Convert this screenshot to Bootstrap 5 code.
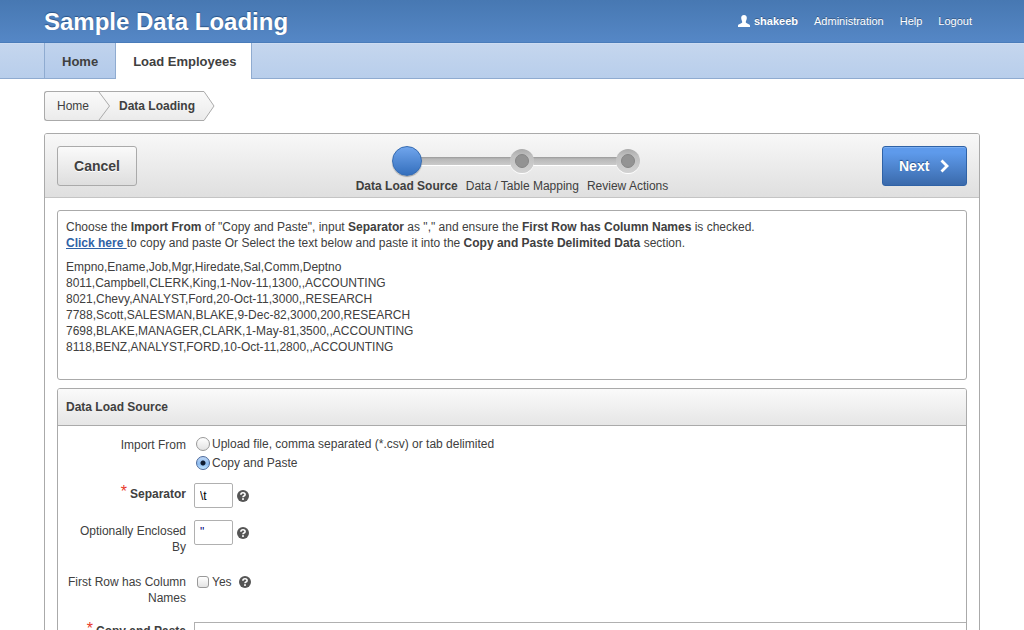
<!DOCTYPE html>
<html lang="en">
<head>
<meta charset="utf-8">
<meta name="viewport" content="width=device-width, initial-scale=1">
<title>Sample Data Loading</title>
<link href="https://cdn.jsdelivr.net/npm/bootstrap@5.3.0/dist/css/bootstrap.min.css" rel="stylesheet">
<style>
  body { font-family: "Liberation Sans", Arial, sans-serif; font-size: 12px; line-height: 16px; color: #404040; background: #fff; }
  .page-gutter { padding-left: 44px; padding-right: 44px; }

  .app-header { height: 43px; background: linear-gradient(#4778b2, #5587c6); border-bottom: 1px solid #4a7cba; }
  .app-title { font-size: 24px; line-height: 28px; padding-top: 2px; font-weight: 700; color: #fff; text-shadow: 0 -1px 1px #2c5588; }
  .user-nav { font-size: 11px; gap: 16px; padding-right: 8px; color: #fff; text-shadow: 0 -1px 0 rgba(0,0,0,.3); }
  .user-nav a { color: #fff; text-decoration: none; }

  .tab-bar { height: 36px; background: linear-gradient(#c5d6ee, #b8ceeb); border-bottom: 1px solid #8fabd0; box-shadow: inset 0 1px #cddcf1; }
  .tab-bar .nav-link { height: 36px; padding: 11px 16px 9px 17px; font-size: 13px; line-height: 16px; font-weight: 700; color: #404040; border: solid #8fabd0; border-width: 0 0 0 1px; border-radius: 0; }
  .tab-bar .nav-link:not(.active) { padding-right: 17px; background: linear-gradient(#c0d3ed, #b3caea); border-bottom-width: 1px; }
  .tab-bar .nav-link.active { padding-right: 15px; color: #404040; background: #fff; border-right-width: 1px; }

  .crumbs { height: 30px; margin: 12px 0; }
  .crumbs ol { height: 30px; border: 1px solid #aaa; border-right: 0; border-radius: 3px 0 0 3px; background: linear-gradient(#fafafa, #ebebeb); padding-left: 12px; }
  .crumbs a { color: #404040; text-decoration: none; padding-right: 9px; }
  .crumbs .current { font-weight: 700; padding: 0 8px; }

  .wizard { border: 1px solid #aaa; border-radius: 3px; }
  .wizard-head { display: grid; grid-template-columns: 1fr auto 1fr; height: 64px; padding: 12px; background: linear-gradient(#f8f8f8, #dfdfdf); border-bottom: 1px solid #c4c4c4; border-radius: 2px 2px 0 0; }
  .wizard-btn { height: 40px; padding: 0 16px; border-radius: 3px; font-size: 14px; line-height: 16px; font-weight: 700; }
  .btn-plain { width: 80px; color: #404040; border: 1px solid #aaa; background: linear-gradient(#fafafa, #dedede); text-shadow: 0 1px #fff; }
  .btn-next { width: 85px; color: #fff; border: 1px solid #2f62a6; background: linear-gradient(#5e9aeb, #5e9aeb 15%, #3a6aab); box-shadow: inset 0 1px #7aaef2; text-shadow: 0 -1px 1px #27508a; }

  .steps > li { padding: 0 4px; }
  .steps > li::before { content: ""; position: absolute; left: 0; right: 0; top: 11px; height: 9px; background: linear-gradient(#999, #b8b8b8 25%, #cacaca); border-bottom: 1px solid #fff; }
  .steps > li:first-child::before { left: 50%; }
  .steps > li:last-child::before { right: 50%; }
  .step-dot { width: 30px; height: 30px; }
  .step-dot span { border-radius: 50%; }
  .dot-active { width: 30px; height: 30px; background: linear-gradient(#70a5ec, #346fbd); border: 1px solid #356bb1; box-shadow: 0 1px 1px rgba(0,0,0,.3); }
  .dot-todo { width: 24px; height: 24px; padding: 5px; background: linear-gradient(#aaa, #c0c0c0 30%, #d2d2d2); box-shadow: 0 1px #fff; }
  .dot-todo::after { content: ""; display: block; width: 14px; height: 14px; border-radius: 50%; background: #939393; border: 1px solid #868686; }

  .region { border: 1px solid #aaa; border-radius: 3px; }
  .region-head { height: 37px; padding: 0 8px; font-size: 12px; font-weight: 700; line-height: 16px; background: linear-gradient(#fafafa, #e6e6e6); border-bottom: 1px solid #aaa; border-radius: 2px 2px 0 0; }
  .intro { min-height: 170px; padding: 8px; }
  .intro a { color: #2f62a6; font-weight: 700; }

  .form-lines { display: grid; row-gap: 12px; padding: 10px 0 12px 8px; }
  .field-label { width: 120px; flex: none; text-align: right; padding-top: 3px; margin-right: 8px; }
  .field-label.top-label { padding-top: 1px; }
  .choice-list { display: grid; row-gap: 3px; padding-left: 2px; }
  .check-line { margin: 3px 7px 0 3px; }
  .check-line label { padding-left: 3px; }
  .required::before { content: "*"; color: #e8382a; font-size: 16px; font-weight: 400; margin-right: 3px; vertical-align: 1px; line-height: 12px; }
  .text-box { width: 39px; height: 25px; margin-right: 4px; padding: 3px 5px; border: 1px solid #b0b0b0; border-radius: 2px; font-size: 12px; line-height: 16px; color: #000; }
  .quote-box { color: #00007a; padding-bottom: 5px; }
  .area-box { height: 120px; border: 1px solid #b0b0b0; border-right: 0; }
  .choice { appearance: none; margin: 0 2px 0 0; flex: none; border: 1px solid #999; background: linear-gradient(#fff, #e3e3e3); }
  .choice[type=radio] { width: 14px; height: 14px; border-radius: 50%; }
  .choice[type=radio]:checked { border-color: #4c6a9c; background: radial-gradient(circle, #101c30 0 2px, transparent 3px), linear-gradient(#bcd5f4, #8dbcf0 60%, #c4e6ff); }
  .choice[type=checkbox] { width: 12px; height: 12px; margin: 0; border-radius: 3px; }
  .help-btn { width: 12px; height: 12px; margin-top: 7px; }
  .help-btn.beside-check { margin-top: 5px; }
</style>
</head>
<body class="vh-100 overflow-hidden">
<svg class="d-none">
  <symbol id="help" viewBox="0 0 12 12">
    <circle cx="6" cy="6" r="6" fill="#555"/>
    <path d="M3.9 4.7Q3.9 2.7 6 2.7Q8.1 2.7 8.1 4.5Q8.1 5.6 6.9 6.1Q6 6.5 6 7.3" fill="none" stroke="#fff" stroke-width="1.6"/>
    <rect x="5.1" y="8.2" width="1.8" height="1.7" fill="#fff"/>
  </symbol>
</svg>

<header class="app-header page-gutter d-flex justify-content-between align-items-center">
  <h1 class="app-title m-0">Sample Data Loading</h1>
  <nav class="user-nav d-flex align-items-center" aria-label="Account">
    <span class="d-flex align-items-center gap-1 fw-bold">
      <svg width="12" height="12" viewBox="0 0 12 12" fill="#fff" aria-hidden="true"><path d="M6 0C8 0 9 1.3 8.8 3.3C8.6 5.200 7.8 5.8 7.8 7.200C7.8 8.6 12 8.8 12 10.7V12H0V10.7C0 8.8 4.2 8.6 4.2 7.200C4.2 5.8 3.4 5.2 3.2 3.3C3 1.3 4 0 6 0Z"/></svg>
      shakeeb
    </span>
    <a href="#">Administration</a>
    <a href="#">Help</a>
    <a href="#">Logout</a>
  </nav>
</header>

<nav class="tab-bar page-gutter" aria-label="Main">
  <ul class="nav flex-nowrap">
    <li class="nav-item"><a class="nav-link" href="#">Home</a></li>
    <li class="nav-item"><a class="nav-link active" aria-current="page" href="#">Load Employees</a></li>
  </ul>
</nav>

<main class="page-gutter">
  <nav class="crumbs d-flex" aria-label="Breadcrumb">
    <ol class="list-unstyled d-flex align-items-center m-0">
      <li class="d-flex align-items-center"><a href="#">Home</a>
        <svg width="13" height="28" viewBox="0 0 13 28" fill="none" stroke="#aaa" aria-hidden="true"><path d="M1 0L11.500 14L1 28"/></svg></li>
      <li class="current" aria-current="page">Data Loading</li>
    </ol>
    <svg width="12" height="30" viewBox="0 0 12 30" aria-hidden="true">
      <defs><linearGradient id="crumbFill" x2="0" y2="1"><stop stop-color="#fafafa"/><stop offset="1" stop-color="#ebebeb"/></linearGradient></defs>
      <path d="M0 .5H1L11 15L1 29.500H0" fill="url(#crumbFill)" stroke="#aaa"/>
    </svg>
  </nav>

  <section class="wizard">
    <div class="wizard-head">
      <button type="button" class="btn btn-plain wizard-btn">Cancel</button>
      <ol class="steps list-unstyled d-flex m-0 text-nowrap">
        <li class="position-relative fw-bold">
          <div class="step-dot position-relative d-flex align-items-center justify-content-center mx-auto"><span class="dot-active"></span></div>
          <div class="mt-1 lh-1">Data Load Source</div>
        </li>
        <li class="position-relative">
          <div class="step-dot position-relative d-flex align-items-center justify-content-center mx-auto"><span class="dot-todo"></span></div>
          <div class="mt-1 lh-1">Data / Table Mapping</div>
        </li>
        <li class="position-relative">
          <div class="step-dot position-relative d-flex align-items-center justify-content-center mx-auto"><span class="dot-todo"></span></div>
          <div class="mt-1 lh-1">Review Actions</div>
        </li>
      </ol>
      <button type="button" class="btn btn-next wizard-btn d-flex align-items-center justify-content-between ms-auto">Next
        <svg width="10" height="14" viewBox="0 0 10 14" fill="none" stroke="#fff" stroke-width="2.800" aria-hidden="true"><path d="M1.500 1.500L7 7L1.500 12.500"/></svg>
      </button>
    </div>

    <div class="p-2">
      <div class="p-1">
        <div class="region intro">
          <p class="mb-2">Choose the <b>Import From</b> of "Copy and Paste", input <b>Separator</b> as "," and ensure the <b>First Row has Column Names</b> is checked.<br>
          <a href="#">Click here </a>to copy and paste Or Select the text below and paste it into the <b>Copy and Paste Delimited Data</b> section.</p>
          <p class="m-0">Empno,Ename,Job,Mgr,Hiredate,Sal,Comm,Deptno<br>
          8011,Campbell,CLERK,King,1-Nov-11,1300,,ACCOUNTING<br>
          8021,Chevy,ANALYST,Ford,20-Oct-11,3000,,RESEARCH<br>
          7788,Scott,SALESMAN,BLAKE,9-Dec-82,3000,200,RESEARCH<br>
          7698,BLAKE,MANAGER,CLARK,1-May-81,3500,,ACCOUNTING<br>
          8118,BENZ,ANALYST,FORD,10-Oct-11,2800,,ACCOUNTING</p>
        </div>

        <form class="region mt-2">
          <h2 class="region-head d-flex align-items-center m-0">Data Load Source</h2>
          <div class="form-lines">
            <div class="d-flex" role="radiogroup" aria-labelledby="importFrom">
              <div class="field-label top-label" id="importFrom">Import From</div>
              <div class="choice-list">
                <div class="d-flex align-items-center"><input class="choice" type="radio" name="source" id="srcFile"><label for="srcFile">Upload file, comma separated (*.csv) or tab delimited</label></div>
                <div class="d-flex align-items-center"><input class="choice" type="radio" name="source" id="srcPaste" checked><label for="srcPaste">Copy and Paste</label></div>
              </div>
            </div>
            <div class="d-flex">
              <label class="field-label required fw-bold" for="separator">Separator</label>
              <input class="text-box" type="text" id="separator" value="\t">
              <button type="button" class="help-btn btn p-0 border-0 d-flex" aria-label="Help on Separator"><svg width="12" height="12"><use href="#help"/></svg></button>
            </div>
            <div class="d-flex">
              <label class="field-label" for="enclosed">Optionally Enclosed By</label>
              <input class="text-box quote-box" type="text" id="enclosed" value="&quot;">
              <button type="button" class="help-btn btn p-0 border-0 d-flex" aria-label="Help on Optionally Enclosed By"><svg width="12" height="12"><use href="#help"/></svg></button>
            </div>
            <div class="d-flex mt-1">
              <label class="field-label" for="firstRow">First Row has Column Names</label>
              <div class="check-line d-flex align-items-center align-self-start"><input class="choice" type="checkbox" id="firstRow"><label for="firstRow">Yes</label></div>
              <button type="button" class="help-btn beside-check btn p-0 border-0 d-flex" aria-label="Help on First Row has Column Names"><svg width="12" height="12"><use href="#help"/></svg></button>
            </div>
            <div class="d-flex mt-1">
              <label class="field-label top-label required fw-bold" for="pasted">Copy and Paste</label>
              <textarea class="area-box flex-grow-1" id="pasted"></textarea>
            </div>
          </div>
        </form>
      </div>
    </div>
  </section>
</main>
<script src="https://cdn.jsdelivr.net/npm/bootstrap@5.3.0/dist/js/bootstrap.bundle.min.js"></script>
</body>
</html>
